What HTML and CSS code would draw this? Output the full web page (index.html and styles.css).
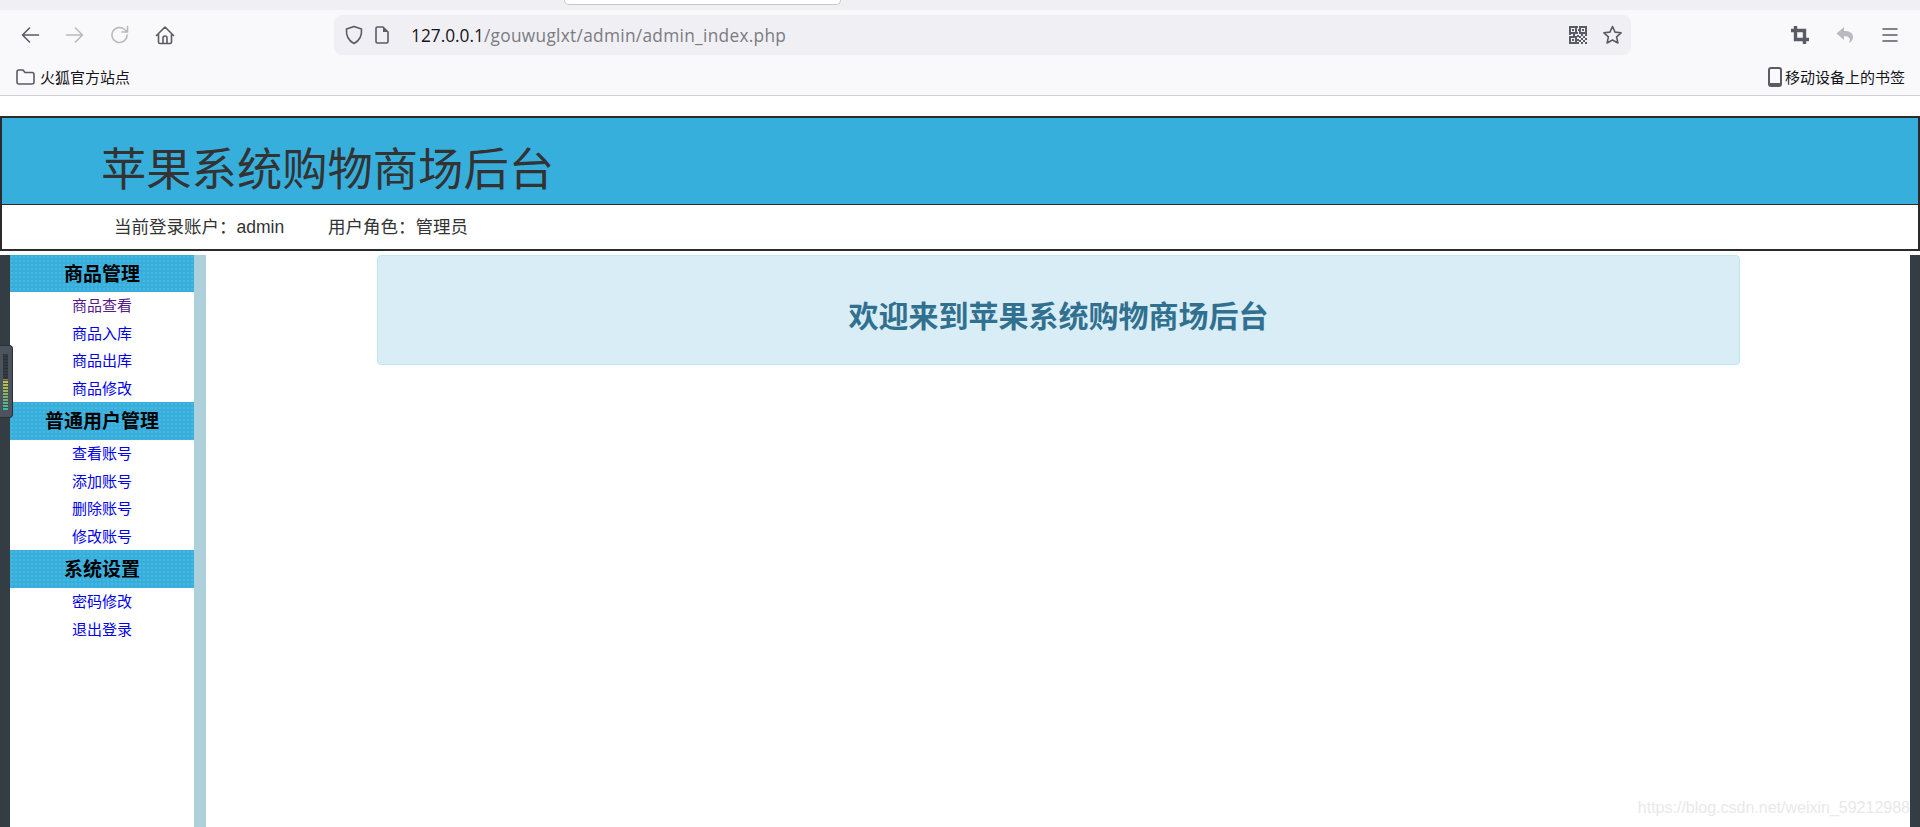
FILE: index.html
```html
<!DOCTYPE html>
<html lang="zh-CN">
<head>
  <meta charset="UTF-8">
  <title>苹果系统购物商场后台</title>
  <link rel="stylesheet" href="styles.css">
</head>
<body>
  <div class="tabstrip"><div class="tab-edge"></div></div>

  <div class="toolbar">
    <div class="nav-btns">
      <svg class="icon" viewBox="0 0 20 20"><path d="M18.5 10H2.5M9.5 3l-7 7 7 7" class="line"/></svg>
      <svg class="icon faded" viewBox="0 0 20 20"><path d="M1.5 10h16M10.5 3l7 7-7 7" class="line"/></svg>
      <svg class="icon faded" viewBox="0 0 20 20"><path d="M17 10a7.5 7.5 0 1 1-2.4-5.5L17.5 7M17.5 1.500V7H12" class="line"/></svg>
      <svg class="icon" viewBox="0 0 20 20"><path d="M1.500 10.500L10 2l8.500 8.500M3.500 8.500V17a1.500 1.500 0 0 0 1.500 1.500h10a1.500 1.500 0 0 0 1.500-1.500V8.500M8 18.500V13a2 2 0 0 1 4 0v5.500" class="line"/></svg>
    </div>
    <div class="urlbar">
      <svg class="icon" viewBox="0 0 20 20"><path d="M10 1.500l7.500 2.500c.5 6.500-1.500 11.500-7.500 14.500C4 15.500 2 10.500 2.500 4z" class="line"/></svg>
      <svg class="icon page-icon" viewBox="0 0 20 20"><path d="M4 3.500A1.500 1.500 0 0 1 5.500 2H11l5 5v9.500a1.500 1.500 0 0 1-1.500 1.500h-9A1.500 1.500 0 0 1 4 16.500z" class="line"/><path d="M11 2v5h5z" class="solid"/></svg>
      <span class="url"><b>127.0.0.1</b>/gouwuglxt/admin/admin_index.php</span>
      <svg class="qr" viewBox="0 0 18 18">
        <path d="M0 0h8v8H0zM2 2v4h4V2zM10 0h8v8h-8zM12 2v4h4V2zM0 10h8v8H0zM2 12v4h4v-4z" class="qr-solid" fill-rule="evenodd"/>
        <path d="M3 3h2v2H3zM13 3h2v2h-2zM3 13h2v2H3zM8 0h1v2H8zM9 3h1v2H9zM8 6h1v2H8zM0 8h2v1H0zM4 8h2v2H4zM8 9h2v2H8zM12 8h2v2h-2zM16 8h2v2h-2zM10 10h2v2h-2zM14 10h2v2h-2zM12 12h2v2h-2zM16 12h2v2h-2zM10 14h2v2h-2zM14 14h2v2h-2zM12 16h2v2h-2zM16 16h2v2h-2zM8 13h2v2H8zM8 16h2v2H8z" class="qr-solid"/>
      </svg>
      <svg class="icon star" viewBox="0 0 20 20"><path d="M10 1.500l2.600 5.600 6 .7-4.500 4.100 1.300 6.100-5.400-3-5.400 3 1.300-6.100L1.400 7.800l6-.7z" class="line"/></svg>
    </div>
    <div class="tool-btns">
      <svg class="icon" viewBox="0 0 20 20"><path d="M5.500 1v13.500H19M1 5.500h13.500V19" class="crop"/></svg>
      <svg class="icon faded" viewBox="0 0 20 20"><path d="M9 2L1.500 8.500 9 15v-4c3.500 0 5 1 6 3.500l-1 3.500c3-1.500 4.500-4 4-7-.5-3-3.500-5-9-5z" class="solid"/></svg>
      <svg class="icon" viewBox="0 0 20 20"><path d="M3 4h14M3 10h14M3 16h14" class="line"/></svg>
    </div>
  </div>

  <div class="bookmarks">
    <div class="bookmark">
      <svg class="folder" viewBox="0 0 19 16"><path d="M1 3a2 2 0 0 1 2-2h4l2 2.500h7a2 2 0 0 1 2 2V13a2 2 0 0 1-2 2H3a2 2 0 0 1-2-2z" class="line"/></svg>
      <span>火狐官方站点</span>
    </div>
    <div class="bookmark mobile">
      <svg class="phone" viewBox="0 0 14 20"><rect x="1" y="1" width="12" height="18" rx="2" class="phone-line"/><path d="M1 16h12v2a1 1 0 0 1-1 1H2a1 1 0 0 1-1-1z" class="solid"/></svg>
      <span>移动设备上的书签</span>
    </div>
  </div>

  <div class="header">
    <div class="header-title">
      <h1>苹果系统购物商场后台</h1>
    </div>
    <div class="header-info">
      <span class="account">当前登录账户&#xFF1A;admin</span>
      <span>用户角色&#xFF1A;管理员</span>
    </div>
  </div>

  <div class="page">
    <div class="sidebar">
      <h3 class="menu-title">商品管理</h3>
      <ul class="menu">
        <li><a href="#" class="visited">商品查看</a></li>
        <li><a href="#">商品入库</a></li>
        <li><a href="#">商品出库</a></li>
        <li><a href="#">商品修改</a></li>
      </ul>
      <h3 class="menu-title">普通用户管理</h3>
      <ul class="menu">
        <li><a href="#">查看账号</a></li>
        <li><a href="#">添加账号</a></li>
        <li><a href="#">删除账号</a></li>
        <li><a href="#">修改账号</a></li>
      </ul>
      <h3 class="menu-title">系统设置</h3>
      <ul class="menu">
        <li><a href="#">密码修改</a></li>
        <li><a href="#">退出登录</a></li>
      </ul>
    </div>
    <div class="main">
      <div class="alert">
        <h2>欢迎来到苹果系统购物商场后台</h2>
      </div>
    </div>
  </div>

  <div class="meter"><div class="meter-bars"></div></div>
  <div class="watermark">https://blog.csdn.net/weixin_59212988</div>
</body>
</html>
```

FILE: styles.css
```css
html, body {
  height: 100%;
}

body {
  margin: 0;
  background-color: #ffffff;
  font-family: "Liberation Sans", "Noto Sans CJK SC", sans-serif;
  color: #333;
  overflow: hidden;
}

/* browser chrome */
.tabstrip {
  height: 10px;
  background-color: #f0f0f4;
  position: relative;
}

.tab-edge {
  position: absolute;
  left: 564px;
  top: 0;
  width: 277px;
  height: 5px;
  background-color: #ffffff;
  border: 1px solid #c8c8cc;
  border-top: none;
  border-radius: 0 0 5px 5px;
  box-sizing: border-box;
}

.toolbar {
  display: flex;
  align-items: center;
  height: 45px;
  background-color: #f9f9fb;
}

.nav-btns {
  display: flex;
  gap: 25px;
  width: 334px;
  padding: 4px 0 0 20px;
  box-sizing: border-box;
}

.urlbar {
  display: flex;
  align-items: center;
  width: 1297px;
  height: 40px;
  margin-top: 5px;
  padding: 0 8px 0 10px;
  box-sizing: border-box;
  background-color: #f0f0f4;
  border-radius: 8px;
}

.icon {
  width: 20px;
  height: 20px;
  flex: none;
}

.faded {
  opacity: 0.4;
}

.line {
  fill: none;
  stroke: #5b5b66;
  stroke-width: 1.6;
  stroke-linecap: round;
  stroke-linejoin: round;
}

.phone-line {
  fill: none;
  stroke: #5b5b66;
  stroke-width: 2;
}

.solid {
  fill: #5b5b66;
}

.crop {
  fill: none;
  stroke: #5b5b66;
  stroke-width: 3.4;
}

.page-icon {
  margin-left: 8px;
}

.url {
  margin-left: 19px;
  flex: 1;
  padding-top: 1px;
  font-family: "Open Sans", "Liberation Sans", sans-serif;
  font-size: 17.3px;
  letter-spacing: 0.3px;
  color: #7b7b82;
}

.url b {
  font-weight: normal;
  letter-spacing: 0;
  color: #15141a;
}

.qr {
  width: 18px;
  height: 18px;
  flex: none;
}

.qr-solid {
  fill: #5b5b66;
}

.star {
  width: 21px;
  margin-left: 15px;
}

.tool-btns {
  display: flex;
  gap: 25px;
  margin-left: 159px;
  padding-top: 4px;
}

.bookmarks {
  display: flex;
  justify-content: space-between;
  align-items: center;
  height: 41px;
  padding: 3px 15px 0 16px;
  box-sizing: border-box;
  background-color: #f9f9fb;
  border-bottom: 1px solid #cfcfd8;
  font-size: 15px;
  color: #15141a;
}

.bookmark {
  display: flex;
  align-items: center;
  gap: 5px;
}

.mobile {
  gap: 3px;
}

.folder {
  width: 19px;
  height: 16px;
}

.phone {
  width: 14px;
  height: 20px;
}

/* site header */
.header {
  margin-top: 20px;
  border: 2px solid #2b2b2b;
  height: 135px;
  box-sizing: border-box;
}

.header-title {
  height: 87px;
  background-color: #37afdd;
  border-bottom: 1px solid #2b2b2b;
  box-sizing: border-box;
  padding-left: 99px;
}

.header-title h1 {
  margin: 0;
  font-size: 45.3px;
  font-weight: normal;
  line-height: 106px;
  height: 86px;
  color: #333;
}

.header-info {
  padding-left: 112px;
  font-size: 17.5px;
  line-height: 45px;
  height: 44px;
}

.account {
  margin-right: 39px;
}

/* left menu + content */
.page {
  display: flex;
  height: 572px;
  margin-top: 4px;
  padding: 0 10px;
  background: linear-gradient(to right, #343c44 10px, transparent 10px, transparent calc(100% - 10px), #343c44 calc(100% - 10px));
}

.sidebar {
  width: 184px;
  border-right: 12px solid #aed0da;
  background-color: #ffffff;
  flex: none;
}

.menu-title {
  margin: 0;
  height: 37px;
  padding-top: 3px;
  box-sizing: border-box;
  line-height: 34px;
  text-align: center;
  font-size: 19px;
  font-weight: bold;
  color: #000;
  background-color: #37afdd;
  background-image: radial-gradient(rgba(255, 255, 255, 0.1) 1px, transparent 1px);
  background-size: 4px 4px;
}

.menu-title + .menu + .menu-title {
  height: 38px;
}

.menu {
  list-style: none;
  margin: 0;
  padding: 0;
}

.menu li {
  height: 27.5px;
  line-height: 27px;
  text-align: center;
  font-size: 15px;
}

.menu a {
  color: #0000ee;
  text-decoration: none;
}

.menu a.visited {
  color: #551a8b;
}

.main {
  flex: 1;
  padding-left: 171px;
  padding-right: 170px;
}

.alert {
  height: 110px;
  box-sizing: border-box;
  background-color: #d9edf7;
  border: 1px solid #bce8f1;
  border-radius: 4px;
  color: #31708f;
  text-align: center;
}

.alert h2 {
  margin: 0;
  padding-top: 44px;
  font-size: 30px;
  font-weight: bold;
  line-height: 33px;
}

/* overlays */
.meter {
  position: absolute;
  left: 0;
  top: 345px;
  width: 13px;
  height: 73px;
  background-color: #4d535c;
  border: 1px solid #2b3036;
  border-left: none;
  border-radius: 0 4px 4px 0;
  box-sizing: border-box;
}

.meter-bars {
  position: absolute;
  left: 3px;
  top: 8px;
  width: 5px;
  height: 56px;
  background:
    repeating-linear-gradient(to bottom, transparent 0, transparent 2px, rgba(40, 44, 50, 0.7) 2px, rgba(40, 44, 50, 0.7) 3px),
    linear-gradient(to bottom, #343a42 0, #343a42 45%, #c9c24a 46%, #7fb26a 75%, #3fb5a0 100%);
}

.watermark {
  position: absolute;
  right: 10px;
  bottom: 10px;
  font-size: 16px;
  color: #e9e9e9;
  white-space: nowrap;
}
```
